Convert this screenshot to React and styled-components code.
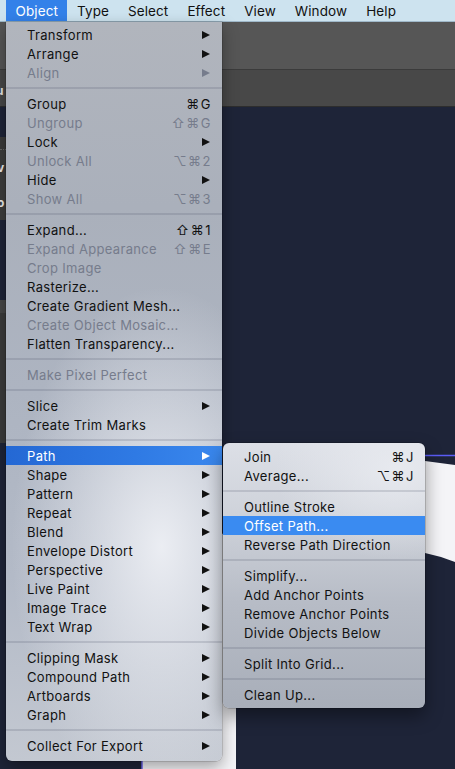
import React from 'react'
import styled, { createGlobalStyle } from 'styled-components'

const GlobalStyle = createGlobalStyle`
  html, body {
    margin: 0;
    padding: 0;
    background: #1e2438;
    overflow: hidden;
  }
  body {
    font-family: Inter, "Noto Sans", "DejaVu Sans", sans-serif;
  }
  * { box-sizing: border-box; }
`;

const Screen = styled.div`
  position: relative;
  width: 455px;
  height: 769px;
  overflow: hidden;
  display: flex;
  flex-direction: column;
  background: #1e2438;
`;

const MenuBar = styled.div`
  height: 22px;
  flex: none;
  display: flex;
  align-items: stretch;
  padding-left: 6px;
  background: #cde3ef;
  border-bottom: 1px solid #9fb8c9;
`;

const BarItem = styled.div`
  display: flex;
  align-items: center;
  padding: 0 9.5px;
  font-size: 13.5px;
  letter-spacing: 0.1px;
  color: ${p => (p.$open ? '#fff' : '#111')};
  background: ${p => (p.$open ? '#3381e9' : 'transparent')};
`;

const AppBar = styled.div`
  height: 48px;
  flex: none;
  background: #565656;
  border-bottom: 1px solid #3b3b3b;
`;

const ControlBar = styled.div`
  height: 37px;
  flex: none;
  display: flex;
  align-items: center;
  background: #484848;
  border-bottom: 1px solid #2d2d2d;
`;

const CutLabel = styled.span`
  margin-left: -4px;
  margin-top: 4px;
  font-size: 12px;
  font-weight: 700;
  color: #e6e6e6;
`;

const Workspace = styled.div`
  flex: 1;
  display: flex;
  min-height: 0;
`;

const LeftPanel = styled.div`
  width: 6px;
  flex: none;
  display: flex;
  flex-direction: column;
  overflow: hidden;
`;

const Slab = styled.div`
  height: ${p => p.$h}px;
  flex: none;
  background: ${p => p.$bg};
  display: flex;
  flex-direction: column;
  justify-content: space-around;
  border-bottom: ${p => (p.$line ? '1px dotted #666' : 'none')};
`;

const SlabText = styled.span`
  margin-left: -3px;
  font-size: 12px;
  font-weight: 700;
  color: #eee;
  line-height: 14px;
`;

const Canvas = styled.div`
  position: relative;
  flex: 1;
  background: #1e2438;
`;

const Artwork = styled.svg`
  position: absolute;
  left: 0;
  top: 0;
`;

const Menu = styled.div`
  position: absolute;
  left: 6px;
  top: 22px;
  width: 216px;
  padding: 3px 0 6px;
  border-radius: 0 0 6px 6px;
  background:
    radial-gradient(ellipse 150px 260px at 72% 71%, rgba(238, 240, 245, 0.95), rgba(238, 240, 245, 0) 100%),
    linear-gradient(180deg, #b1b5bd 0%, #aab0bb 25%, #adb4c1 50%, #b3bac7 75%, #c3c8d1 100%);
  box-shadow: 0 6px 16px rgba(0, 0, 0, 0.35), 0 0 0 0.5px rgba(0, 0, 0, 0.25);
`;

const SubMenu = styled.div`
  position: absolute;
  left: 223px;
  top: 443px;
  width: 202px;
  padding: 4px 0;
  border-radius: 6px;
  background:
    radial-gradient(ellipse 120px 90px at 85% 10%, rgba(235, 237, 242, 0.8), rgba(235, 237, 242, 0) 100%),
    linear-gradient(180deg, #dcdfe6 0%, #cdd1d9 30%, #b7bcc6 60%, #a8aeb9 100%);
  box-shadow: 0 8px 18px rgba(0, 0, 0, 0.4), 0 0 0 0.5px rgba(0, 0, 0, 0.3);
`;

const Row = styled.div`
  height: 19px;
  display: flex;
  align-items: center;
  padding: 0 12px 0 21px;
  font-size: 13px;
  letter-spacing: 0.33px;
  color: ${p => (p.$active ? '#fff' : p.$disabled ? '#767c8c' : '#111')};
  background: ${p =>
    p.$active
      ? p.$sub
        ? '#3a8bf1'
        : 'linear-gradient(90deg, #2468d4 0%, #2f7ae4 60%, #3a88ee 100%)'
      : 'transparent'};
`;

const Label = styled.span`
  flex: 1;
  white-space: nowrap;
`;

const Keys = styled.span`
  margin-right: -2px;
  letter-spacing: 1.5px;
  font-size: 13px;
  white-space: nowrap;
`;

const Arrow = styled.span`
  width: 0;
  height: 0;
  border-top: 4.5px solid transparent;
  border-bottom: 4.5px solid transparent;
  border-left: 8px solid currentColor;
`;

const Separator = styled.div`
  height: 12px;
  display: flex;
  align-items: center;
  &::after {
    content: '';
    flex: 1;
    height: 2px;
    background: rgba(70, 80, 100, 0.18);
  }
`;

const menuBar = ['Object', 'Type', 'Select', 'Effect', 'View', 'Window', 'Help'];

const objectMenu = [
  { label: 'Transform', sub: true },
  { label: 'Arrange', sub: true },
  { label: 'Align', sub: true, disabled: true },
  'sep',
  { label: 'Group', keys: '⌘G' },
  { label: 'Ungroup', keys: '⇧⌘G', disabled: true },
  { label: 'Lock', sub: true },
  { label: 'Unlock All', keys: '⌥⌘2', disabled: true },
  { label: 'Hide', sub: true },
  { label: 'Show All', keys: '⌥⌘3', disabled: true },
  'sep',
  { label: 'Expand...', keys: '⇧⌘1' },
  { label: 'Expand Appearance', keys: '⇧⌘E', disabled: true },
  { label: 'Crop Image', disabled: true },
  { label: 'Rasterize...' },
  { label: 'Create Gradient Mesh...' },
  { label: 'Create Object Mosaic...', disabled: true },
  { label: 'Flatten Transparency...' },
  'sep',
  { label: 'Make Pixel Perfect', disabled: true },
  'sep',
  { label: 'Slice', sub: true },
  { label: 'Create Trim Marks' },
  'sep',
  { label: 'Path', sub: true, active: true },
  { label: 'Shape', sub: true },
  { label: 'Pattern', sub: true },
  { label: 'Repeat', sub: true },
  { label: 'Blend', sub: true },
  { label: 'Envelope Distort', sub: true },
  { label: 'Perspective', sub: true },
  { label: 'Live Paint', sub: true },
  { label: 'Image Trace', sub: true },
  { label: 'Text Wrap', sub: true },
  'sep',
  { label: 'Clipping Mask', sub: true },
  { label: 'Compound Path', sub: true },
  { label: 'Artboards', sub: true },
  { label: 'Graph', sub: true },
  'sep',
  { label: 'Collect For Export', sub: true },
];

const pathMenu = [
  { label: 'Join', keys: '⌘J' },
  { label: 'Average...', keys: '⌥⌘J' },
  'sep',
  { label: 'Outline Stroke' },
  { label: 'Offset Path...', active: true },
  { label: 'Reverse Path Direction' },
  'sep',
  { label: 'Simplify...' },
  { label: 'Add Anchor Points' },
  { label: 'Remove Anchor Points' },
  { label: 'Divide Objects Below' },
  'sep',
  { label: 'Split Into Grid...' },
  'sep',
  { label: 'Clean Up...' },
];

function MenuItems({ items, sub }) {
  return items.map((item, i) =>
    item === 'sep' ? (
      <Separator key={i} />
    ) : (
      <Row key={i} $disabled={item.disabled} $active={item.active} $sub={sub}>
        <Label>{item.label}</Label>
        {item.keys && <Keys>{item.keys}</Keys>}
        {item.sub && <Arrow />}
      </Row>
    )
  );
}

export default function App() {
  return (
    <Screen>
      <GlobalStyle />
      <MenuBar>
        {menuBar.map((name, i) => (
          <BarItem key={name} $open={i === 0}>{name}</BarItem>
        ))}
      </MenuBar>
      <AppBar />
      <ControlBar>
        <CutLabel>u</CutLabel>
      </ControlBar>
      <Workspace>
        <LeftPanel>
          <Slab $h={30} $bg="#1e2438" />
          <Slab $h={13} $bg="#3a3a3a" $line />
          <Slab $h={70} $bg="#3d3d3d">
            <SlabText>v</SlabText>
            <SlabText>o</SlabText>
          </Slab>
          <Slab $h={80} $bg="#1e2438" />
          <Slab $h={13} $bg="#474747" />
          <Slab $h={130} $bg="#3b3b3b" />
          <Slab $h={326} $bg="#1e2438" />
        </LeftPanel>
        <Canvas>
          <Artwork width="449" height="662" viewBox="6 107 449 662">
            <path
              d="M142 769 L142 600 L300 470 L425 461 L455 465 L455 562 Q440 556 425 553 L236 707 L236 769 Z"
              fill="#f4f4f7"
            />
            <line x1="425" y1="455.5" x2="455" y2="455.5" stroke="#5b5cf6" strokeWidth="1.5" />
            <line x1="142" y1="700" x2="142" y2="769" stroke="#6b63ee" strokeWidth="1.5" />
          </Artwork>
        </Canvas>
      </Workspace>
      <Menu>
        <MenuItems items={objectMenu} />
      </Menu>
      <SubMenu>
        <MenuItems items={pathMenu} sub />
      </SubMenu>
    </Screen>
  );
}
